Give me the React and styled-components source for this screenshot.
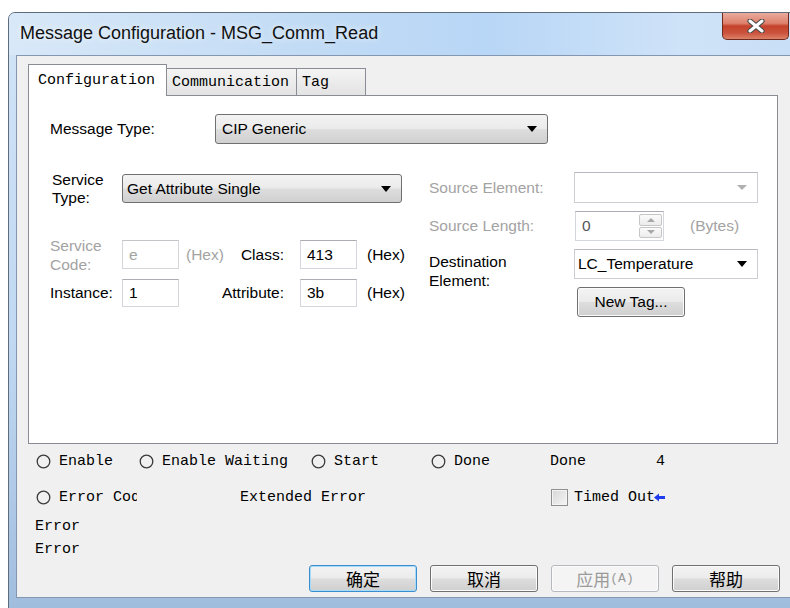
import React from "react";
import styled, { createGlobalStyle, css } from "styled-components";

const sans = `"Liberation Sans", Arial, sans-serif`;
const mono = `"Liberation Mono", "Courier New", monospace`;
const cjk = `"Noto Sans CJK SC", "Liberation Sans", sans-serif`;

const GlobalStyle = createGlobalStyle`
  html, body {
    margin: 0;
    padding: 0;
    background: #fff;
    overflow: hidden;
  }
  body {
    width: 790px;
    height: 608px;
  }
`;

// Window frame
const Window = styled.div`
  margin: 12px 0 0 8px;
  width: 800px;
  height: 610px;
  box-sizing: border-box;
  border: 1px solid #5f6c7c;
  border-radius: 7px 7px 0 0;
  background: linear-gradient(
    to bottom,
    #d2e4f7 0%,
    #c0d8f2 55%,
    #a9c4e3 88%,
    #9fbbdc 100%
  );
  display: flex;
  flex-direction: column;
  overflow: hidden;
`;

const TitleBar = styled.div`
  height: 42px;
  display: flex;
  align-items: flex-start;
  background: linear-gradient(
    to right,
    #d8e8f8 0%,
    #c3dcf5 35%,
    #b8d6f6 60%,
    #cfe3f8 85%,
    #c7def6 100%
  );
`;

const Title = styled.div`
  padding-left: 11px;
  line-height: 40px;
  font-family: ${sans};
  font-size: 18px;
  color: #111;
  text-shadow: 0 0 6px rgba(255, 255, 255, 0.9);
`;

const CloseButton = styled.div`
  margin: -1px 18px 0 auto;
  width: 67px;
  height: 28px;
  box-sizing: border-box;
  border: 1px solid #6e2a1f;
  border-top: none;
  border-radius: 0 0 5px 5px;
  background: linear-gradient(
    to bottom,
    #eab0a2 0%,
    #de806c 42%,
    #c5412a 52%,
    #cb533d 78%,
    #dc8268 100%
  );
  display: flex;
  align-items: center;
  justify-content: center;
`;

const Client = styled.div`
  margin-left: 7px;
  height: 543px;
  box-sizing: border-box;
  border: 1px solid #8497b0;
  border-right: none;
  background: #f0f0f0;
  padding: 8px 0 0 11px;
  display: flex;
  flex-direction: column;
`;

// Tabs
const TabStrip = styled.div`
  display: flex;
  align-items: flex-end;
  height: 31px;
`;

const Tab = styled.div`
  box-sizing: border-box;
  width: ${(p) => p.$w}px;
  border: 1px solid #898c95;
  border-bottom: none;
  font-family: ${mono};
  font-size: 15px;
  color: #000;
  padding-left: 9px;
  display: flex;
  align-items: center;
  ${(p) =>
    p.$active
      ? css`
          height: 32px;
          margin-bottom: -1px;
          background: #fff;
          position: relative;
          z-index: 1;
        `
      : css`
          height: 27px;
          margin-left: -1px;
          padding-left: 5px;
          background: linear-gradient(#f4f4f4, #e3e3e3);
        `}
`;

const Panel = styled.div`
  width: 750px;
  height: 349px;
  box-sizing: border-box;
  border: 1px solid #898c95;
  background: #fff;
  padding: 18px 0 0 21px;
  font-family: ${sans};
  font-size: 15.5px;
  color: #000;
`;

const TypeRow = styled.div`
  display: flex;
  align-items: center;
  height: 30px;
`;

const Label = styled.div`
  box-sizing: border-box;
  width: ${(p) => (p.$w ? `${p.$w}px` : "auto")};
  color: ${(p) => (p.$disabled ? "#a3a3a3" : "#000")};
  line-height: ${(p) => (p.$lh ? `${p.$lh}px` : "normal")};
  padding-left: ${(p) => p.$pl || 0}px;
  white-space: nowrap;
`;

const Columns = styled.div`
  display: flex;
  margin-top: 28px;
`;

const LeftCol = styled.div`
  width: 379px;
  padding-top: 2px;
`;

const ServiceRow = styled.div`
  display: flex;
  align-items: center;
  height: 29px;
`;

const FieldGrid = styled.div`
  margin-top: 37px;
  display: grid;
  grid-template-columns: 72px 57px 121px 57px auto;
  grid-template-rows: 29px 28px;
  row-gap: 10px;
  align-items: center;
`;

const Middle = styled.div`
  display: flex;
  justify-content: ${(p) => (p.$end ? "flex-end" : "space-between")};
  padding: 0 16px 0 7px;
  white-space: nowrap;
`;

const Hex = styled.div`
  padding-left: 10px;
  color: ${(p) => (p.$disabled ? "#a3a3a3" : "#000")};
`;

const TextBox = styled.div`
  box-sizing: border-box;
  height: 100%;
  width: ${(p) => (p.$w ? `${p.$w}px` : "100%")};
  background: #fff;
  border: 1px solid ${(p) => (p.$disabled ? "#d4d6da" : "#d3d6db")};
  border-top-color: ${(p) => (p.$disabled ? "#c2c4c8" : "#abadb3")};
  color: ${(p) => (p.$disabled ? "#a3a3a3" : "#000")};
  padding-left: 6px;
  display: flex;
  align-items: center;
  position: relative;
`;

const RightCol = styled.div`
  display: grid;
  grid-template-columns: 145px 184px;
  grid-template-rows: 31px 30px 30px 30px;
  row-gap: 8px;
  align-items: center;
`;

const DestLabel = styled(Label)`
  grid-row: 3 / span 2;
  align-self: start;
  padding-top: 3px;
`;

// Combo boxes
const Combo = styled.div`
  box-sizing: border-box;
  width: ${(p) => p.$w}px;
  height: ${(p) => p.$h || 30}px;
  display: flex;
  align-items: center;
  justify-content: space-between;
  padding: 0 6px 0 ${(p) => p.$pl || 6}px;
  ${(p) =>
    p.$kind === "button"
      ? css`
          border: 1px solid #707070;
          border-radius: 3px;
          background: linear-gradient(
            to bottom,
            #f3f3f3 0%,
            #ebebeb 48%,
            #dddddd 52%,
            #d0d0d0 100%
          );
        `
      : css`
          background: #fff;
          border: 1px solid #ccced3;
          border-top-color: #b6b9be;
        `}
`;

const Arrow = styled.span`
  width: 0;
  height: 0;
  margin-right: 4px;
  border-left: ${(p) => (p.$small ? 5 : 5.5)}px solid transparent;
  border-right: ${(p) => (p.$small ? 5 : 5.5)}px solid transparent;
  border-top: ${(p) => (p.$small ? 5 : 6)}px solid
    ${(p) => (p.$muted ? "#b0b0b0" : "#000")};
`;

const SpinWrap = styled.div`
  display: flex;
  align-items: center;
  height: 30px;
  white-space: nowrap;
  color: #a3a3a3;
  gap: 26px;
  margin-left: 1px;
`;

const SpinButtons = styled.div`
  position: absolute;
  right: 1px;
  top: 2px;
  bottom: 2px;
  width: 23px;
  display: flex;
  flex-direction: column;
  gap: 1px;
`;

const SpinHalf = styled.div`
  flex: 1;
  box-sizing: border-box;
  border: 1px solid #c6c6c6;
  border-radius: 2px;
  background: linear-gradient(#fbfbfb, #ececec);
  display: flex;
  align-items: center;
  justify-content: center;

  &::after {
    content: "";
    border-left: 4px solid transparent;
    border-right: 4px solid transparent;
    ${(p) =>
      p.$up
        ? "border-bottom: 4px solid #a8a8a8;"
        : "border-top: 4px solid #a8a8a8;"}
  }
`;

const Button = styled.div`
  box-sizing: border-box;
  width: 108px;
  height: ${(p) => p.$h || 27}px;
  border-radius: 3px;
  display: flex;
  align-items: center;
  justify-content: center;
  font-family: ${(p) => (p.$cjk ? cjk : sans)};
  font-size: ${(p) => (p.$cjk ? 17 : 15.5)}px;
  color: ${(p) => (p.$disabled ? "#9a9a9a" : "#000")};
  border: 1px solid
    ${(p) => (p.$default ? "#3c8dd0" : p.$disabled ? "#b5b9bd" : "#707070")};
  background: ${(p) =>
    p.$disabled
      ? "#f4f4f4"
      : "linear-gradient(to bottom, #f3f3f3 0%, #ebebeb 48%, #dddddd 52%, #cfcfcf 100%)"};
  box-shadow: ${(p) =>
    p.$default ? "inset 0 0 0 1px #a6dcf8" : "inset 0 0 0 1px #fbfbfb"};
`;

// Status area under the tab panel
const StatusGrid = styled.div`
  display: grid;
  grid-template-columns: 103px 101px 71px 120px 119px 106px auto;
  grid-template-rows: 34px 38px 20px 26px;
  align-items: center;
  padding-left: 8px;
  font-family: ${mono};
  font-size: 15px;
  color: #000;
  white-space: nowrap;
`;

const Cell = styled.div`
  grid-column: ${(p) => p.$col} / span ${(p) => p.$span || 1};
  grid-row: ${(p) => p.$row};
  display: flex;
  align-items: center;
  gap: ${(p) => (p.$gap != null ? p.$gap : 8)}px;
  overflow: hidden;
  margin-left: ${(p) => p.$ml || 0}px;
`;

const Clip = styled.span`
  display: inline-block;
  width: ${(p) => p.$w}px;
  overflow: hidden;
`;

const CheckBox = styled.span`
  box-sizing: border-box;
  width: 17px;
  height: 17px;
  border: 1px solid #8e8f8f;
  background: linear-gradient(135deg, #d6d6d6, #f6f6f6);
  box-shadow: inset 0 0 0 1px #f4f4f4;
`;

const ButtonRow = styled.div`
  display: flex;
  gap: 13px;
  margin: 3px 0 0 281px;
`;

const Radio = () => (
  <svg width="15" height="15" viewBox="0 0 15 15">
    <circle cx="7.5" cy="7.5" r="6.3" fill="none" stroke="#3a3a3a" strokeWidth="1.3" />
  </svg>
);

const BackArrow = () => (
  <svg width="11" height="9" viewBox="0 0 11 9" style={{ marginLeft: -7 }}>
    <path d="M0 4.5 L5 0.5 L5 3 L11 3 L11 6 L5 6 L5 8.5 Z" fill="#1f3cf0" />
  </svg>
);

const CloseGlyph = () => (
  <svg width="20" height="14" viewBox="0 0 20 14">
    <path d="M4 2 L16 12 M16 2 L4 12" stroke="#4a4a4a" strokeWidth="5.2" strokeLinecap="round" />
    <path d="M4 2 L16 12 M16 2 L4 12" stroke="#fff" strokeWidth="3" strokeLinecap="round" />
  </svg>
);

export default function App() {
  return (
    <>
      <GlobalStyle />
      <Window>
        <TitleBar>
          <Title>Message Configuration - MSG_Comm_Read</Title>
          <CloseButton>
            <CloseGlyph />
          </CloseButton>
        </TitleBar>
        <Client>
          <TabStrip>
            <Tab $active $w={139}>Configuration</Tab>
            <Tab $w={131}>Communication</Tab>
            <Tab $w={70}>Tag</Tab>
          </TabStrip>
          <Panel>
            <TypeRow>
              <Label $w={165}>Message Type:</Label>
              <Combo $kind="button" $w={333}>
                <span>CIP Generic</span>
                <Arrow />
              </Combo>
            </TypeRow>
            <Columns>
              <LeftCol>
                <ServiceRow>
                  <Label $w={72} $lh={18} $pl={2}>
                    Service
                    <br />
                    Type:
                  </Label>
                  <Combo $kind="button" $w={280} $h={29} $pl={4}>
                    <span>Get Attribute Single</span>
                    <Arrow />
                  </Combo>
                </ServiceRow>
                <FieldGrid>
                  <Label $disabled $lh={19}>
                    Service
                    <br />
                    Code:
                  </Label>
                  <TextBox $disabled>e</TextBox>
                  <Middle>
                    <Label $disabled>(Hex)</Label>
                    <Label>Class:</Label>
                  </Middle>
                  <TextBox>413</TextBox>
                  <Hex>(Hex)</Hex>

                  <Label>Instance:</Label>
                  <TextBox>1</TextBox>
                  <Middle $end>
                    <Label>Attribute:</Label>
                  </Middle>
                  <TextBox>3b</TextBox>
                  <Hex>(Hex)</Hex>
                </FieldGrid>
              </LeftCol>
              <RightCol>
                <Label $disabled>Source Element:</Label>
                <Combo $w={184} $h={31}>
                  <span />
                  <Arrow $muted $small />
                </Combo>

                <Label $disabled>Source Length:</Label>
                <SpinWrap>
                  <TextBox $w={89}>
                    <span style={{ color: "#555" }}>0</span>
                    <SpinButtons>
                      <SpinHalf $up />
                      <SpinHalf />
                    </SpinButtons>
                  </TextBox>
                  <span>(Bytes)</span>
                </SpinWrap>

                <DestLabel $lh={19}>
                  Destination
                  <br />
                  Element:
                </DestLabel>
                <Combo $w={184} $pl={3}>
                  <span>LC_Temperature</span>
                  <Arrow />
                </Combo>

                <div style={{ gridColumn: 2, gridRow: 4, paddingLeft: 3 }}>
                  <Button $h={30}>New Tag...</Button>
                </div>
              </RightCol>
            </Columns>
          </Panel>

          <StatusGrid>
            <Cell $col={1} $row={1}>
              <Radio />
              Enable
            </Cell>
            <Cell $col={2} $row={1} $span={2}>
              <Radio />
              Enable Waiting
            </Cell>
            <Cell $col={4} $row={1}>
              <Radio />
              Start
            </Cell>
            <Cell $col={5} $row={1}>
              <Radio />
              Done
            </Cell>
            <Cell $col={6} $row={1}>Done</Cell>
            <Cell $col={7} $row={1}>4</Cell>

            <Cell $col={1} $row={2} $span={2}>
              <Radio />
              <Clip $w={78}>Error Code</Clip>
            </Cell>
            <Cell $col={3} $row={2} $span={3}>Extended Error</Cell>
            <Cell $col={6} $row={2} $span={2} $gap={6} $ml={1}>
              <CheckBox />
              Timed Out
              <BackArrow />
            </Cell>

            <Cell $col={1} $row={3} $ml={-1}>Error</Cell>
            <Cell $col={1} $row={4} $ml={-1}>Error</Cell>
          </StatusGrid>

          <ButtonRow>
            <Button $cjk $default>确定</Button>
            <Button $cjk>取消</Button>
            <Button $cjk $disabled>
              应用<span style={{ fontFamily: mono, fontSize: 13 }}>(A)</span>
            </Button>
            <Button $cjk>帮助</Button>
          </ButtonRow>
        </Client>
      </Window>
    </>
  );
}
